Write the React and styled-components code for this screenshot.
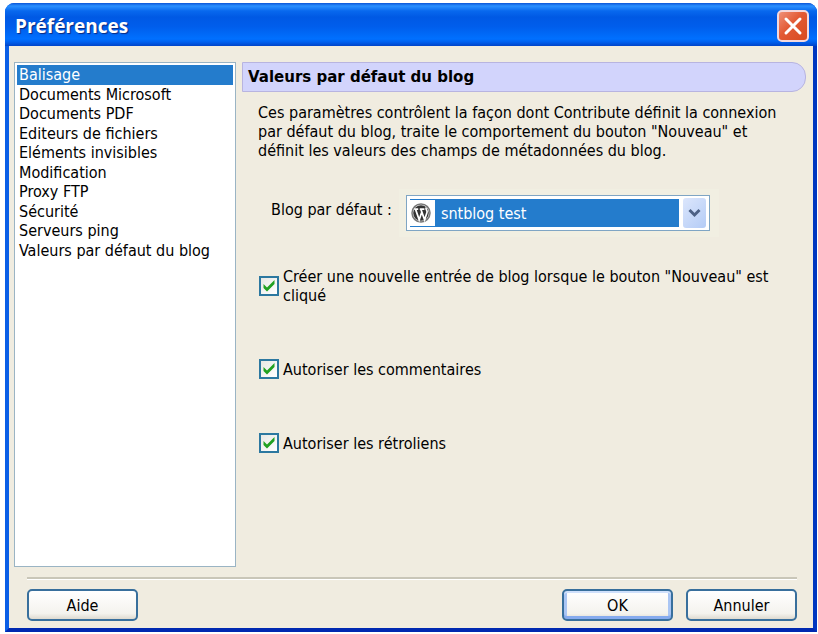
import React, { useState } from 'react'
import styled, { createGlobalStyle } from 'styled-components'

const GlobalStyle = createGlobalStyle`
  * {
    box-sizing: border-box;
  }
  body {
    margin: 0;
    background: #fff;
    color: #000;
    font: 16px/19px "DejaVu Sans Condensed", "Noto Sans", sans-serif;
  }
  button, select, input {
    font: inherit;
    color: inherit;
    margin: 0;
  }
`

const Page = styled.div`
  padding: 3px 1px 2px 5px;
`
const Dialog = styled.form`
  display: flex;
  flex-direction: column;
  min-height: calc(100vh - 5px);
  border: solid;
  border-width: 0 4px 4px 4px;
  border-color: #0038b8 #0036c0 #0028b0 #0a5ee6;
  border-radius: 9px 9px 0 0;
  background: #0a5ee6;
`
const TitleBar = styled.header`
  display: flex;
  align-items: center;
  justify-content: space-between;
  height: 43px;
  margin: 0 -4px;
  padding: 3px 8px 0 10px;
  border-radius: 9px 9px 0 0;
  background: linear-gradient(#0a55d8 0, #2a90ff 3px, #0868ee 8px, #0059e4 14px, #005eec 24px, #0070ff 36px, #0060ee 39px, #0044c8 43px);
`
const Title = styled.h1`
  margin: 0;
  color: #fff;
  font: bold 19px/24px "Open Sans", "Noto Sans", sans-serif;
  text-shadow: 1px 1px 1px #0a2a80;
`
const CloseButton = styled.button`
  width: 32px;
  height: 32px;
  padding: 0;
  border: 2px solid #f4d8dc;
  border-radius: 5px;
  background: linear-gradient(135deg, #f09078, #e25a34 45%, #d84a20);

  svg {
    display: block;
  }
`
const Body = styled.div`
  display: flex;
  flex: 1;
  flex-direction: column;
  padding: 16px 7px 7px 5px;
  background: #f0ece0;
`
const Columns = styled.div`
  display: flex;
  flex: 1;
  gap: 6px;
`
const Categories = styled.nav`
  flex: 0 0 222px;
  padding: 2px;
  border: 1px solid #9ab4c4;
  background: #fff;
`
const CategoryRows = styled.ul`
  display: grid;
  grid-auto-rows: 1fr;
  height: 195px;
  margin: 0;
  padding: 0;
  list-style: none;
`
const Category = styled.li`
  display: flex;
  align-items: center;
  padding: 0 2px;
  background: ${props => props.$active ? '#247ccc' : 'none'};
  color: ${props => props.$active ? '#fff' : '#000'};
  white-space: nowrap;
  cursor: default;
`
const Panel = styled.section`
  flex: 1;
  min-width: 0;
`
const PanelTitle = styled.h2`
  margin: 0;
  padding: 4px 5px;
  border: 1px solid #b8b4e0;
  border-radius: 0 14px 14px 0;
  background: #d2d4fc;
  font: bold 15px/20px "DejaVu Sans", sans-serif;
`
const Intro = styled.p`
  margin: 11px 10px 0 16px;
`
const Field = styled.div`
  display: flex;
  align-items: center;
  gap: 7px;
  margin: 29px 0 0 29px;
`
const FieldLabel = styled.label`
  padding-bottom: 8px;
`
const SelectArea = styled.div`
  padding: 6px 9px 6px 7px;
  background: #f1efe2;
`
const SelectBox = styled.div`
  display: flex;
  align-items: center;
  width: 304px;
  padding: 2px 3px;
  border: 1px solid #7fa5c4;
  background: #fff;
`
const Picked = styled.div`
  display: flex;
  flex: 1;
  align-items: center;
  margin-right: 4px;
  border: solid #247ccc;
  border-width: 1px 0;
`
const BlogSelect = styled.select`
  flex: 1;
  height: 26px;
  padding: 0 6px;
  border: 0;
  border-radius: 0;
  outline: 0;
  appearance: none;
  background: #247ccc;
  color: #fff;
`
const Arrow = styled.span`
  display: grid;
  place-items: center;
  width: 23px;
  height: 30px;
  border-radius: 3px;
  background: linear-gradient(135deg, #dce6fc, #b4ccf6);
`
const Options = styled.div`
  display: grid;
  gap: 54px;
  margin: 30px 20px 0 17px;
`
const Option = styled.label`
  display: flex;
  align-items: center;
  gap: 4px;
`
const Tick = styled.span`
  display: grid;
  flex: none;

  > * {
    grid-area: 1 / 1;
  }
  svg {
    pointer-events: none;
  }
  input:not(:checked) + svg {
    display: none;
  }
`
const Box = styled.input`
  width: 20px;
  height: 20px;
  border: 2px solid #2c78a0;
  appearance: none;
  background: linear-gradient(135deg, #e8e8e4, #fff);
`
const Footer = styled.footer`
  display: flex;
  gap: 13px;
  margin: 10px 9px 0 13px;
  padding-top: 10px;
  border-top: 2px solid #c9c6b8;
  box-shadow: inset 0 1px #fff;
`
const DialogButton = styled.button`
  width: 111px;
  height: 32px;
  padding: 0;
  border: 2px solid #386f9c;
  border-radius: 5px;
  background: linear-gradient(#fff, #f4f3ee 80%, #dedad0);
  box-shadow: ${props => props.$primary ? 'inset 0 2px #cfe0fb, inset 0 -3px #86abee, inset 3px 0 #aac6f4, inset -3px 0 #aac6f4' : 'none'};
  margin-right: ${props => props.$start ? 'auto' : '0'};
`

const CATEGORIES = [
  'Balisage',
  'Documents Microsoft',
  'Documents PDF',
  'Editeurs de fichiers',
  'Eléments invisibles',
  'Modification',
  'Proxy FTP',
  'Sécurité',
  'Serveurs ping',
  'Valeurs par défaut du blog'
]

const OPTIONS = [
  { id: 'newEntry', label: 'Créer une nouvelle entrée de blog lorsque le bouton "Nouveau" est cliqué' },
  { id: 'comments', label: 'Autoriser les commentaires' },
  { id: 'trackbacks', label: 'Autoriser les rétroliens' }
]

const WordPressLogo = () => (
  <svg width="25" height="26" viewBox="0 0 25 26" aria-hidden="true">
    <circle cx="11" cy="13" r="9" fill="#fff" stroke="#777" strokeWidth="1.5" />
    <circle cx="11" cy="13" r="7.8" fill="#333" />
    <path d="M4.2 9.2h4M9.8 9.2h4.6M5.6 9.4l3.6 10.4L11.6 12.6M10.9 9.4l3.7 10.4 2.4-7.4c.7-2-1.6-2.6-.9-5" fill="none" stroke="#fff" strokeWidth="1.7" />
  </svg>
)

function App () {
  const [active, setActive] = useState('Balisage')

  return (
    <Page>
      <GlobalStyle />
      <Dialog onSubmit={e => e.preventDefault()}>
        <TitleBar>
          <Title>Préférences</Title>
          <CloseButton type="button" aria-label="Fermer">
            <svg width="28" height="28" viewBox="0 0 28 28">
              <path d="M7 7l14 14M21 7L7 21" stroke="#fff" strokeWidth="3" strokeLinecap="round" />
            </svg>
          </CloseButton>
        </TitleBar>
        <Body>
          <Columns>
            <Categories>
              <CategoryRows>
                {CATEGORIES.map(name => (
                  <Category key={name} $active={name === active} onClick={() => setActive(name)}>
                    {name}
                  </Category>
                ))}
              </CategoryRows>
            </Categories>
            <Panel>
              <PanelTitle>Valeurs par défaut du blog</PanelTitle>
              <Intro>
                Ces paramètres contrôlent la façon dont Contribute définit la connexion
                par défaut du blog, traite le comportement du bouton "Nouveau" et
                définit les valeurs des champs de métadonnées du blog.
              </Intro>
              <Field>
                <FieldLabel htmlFor="blog">Blog par défaut :</FieldLabel>
                <SelectArea>
                  <SelectBox>
                    <Picked>
                      <WordPressLogo />
                      <BlogSelect id="blog">
                        <option>sntblog test</option>
                      </BlogSelect>
                    </Picked>
                    <Arrow>
                      <svg width="13" height="10" viewBox="0 0 13 10">
                        <path d="M1.5 2l5 5 5-5" fill="none" stroke="#4d6185" strokeWidth="3" />
                      </svg>
                    </Arrow>
                  </SelectBox>
                </SelectArea>
              </Field>
              <Options>
                {OPTIONS.map(({ id, label }) => (
                  <Option key={id} htmlFor={id}>
                    <Tick>
                      <Box type="checkbox" id={id} defaultChecked />
                      <svg width="20" height="20" viewBox="0 0 20 20">
                        <path d="M4.500 8v4L8 15.500l7.500-7.500V4L8 11.500z" fill="#21a121" />
                      </svg>
                    </Tick>
                    {label}
                  </Option>
                ))}
              </Options>
            </Panel>
          </Columns>
          <Footer>
            <DialogButton type="button" $start>Aide</DialogButton>
            <DialogButton type="submit" $primary>OK</DialogButton>
            <DialogButton type="button">Annuler</DialogButton>
          </Footer>
        </Body>
      </Dialog>
    </Page>
  )
}

export default App
